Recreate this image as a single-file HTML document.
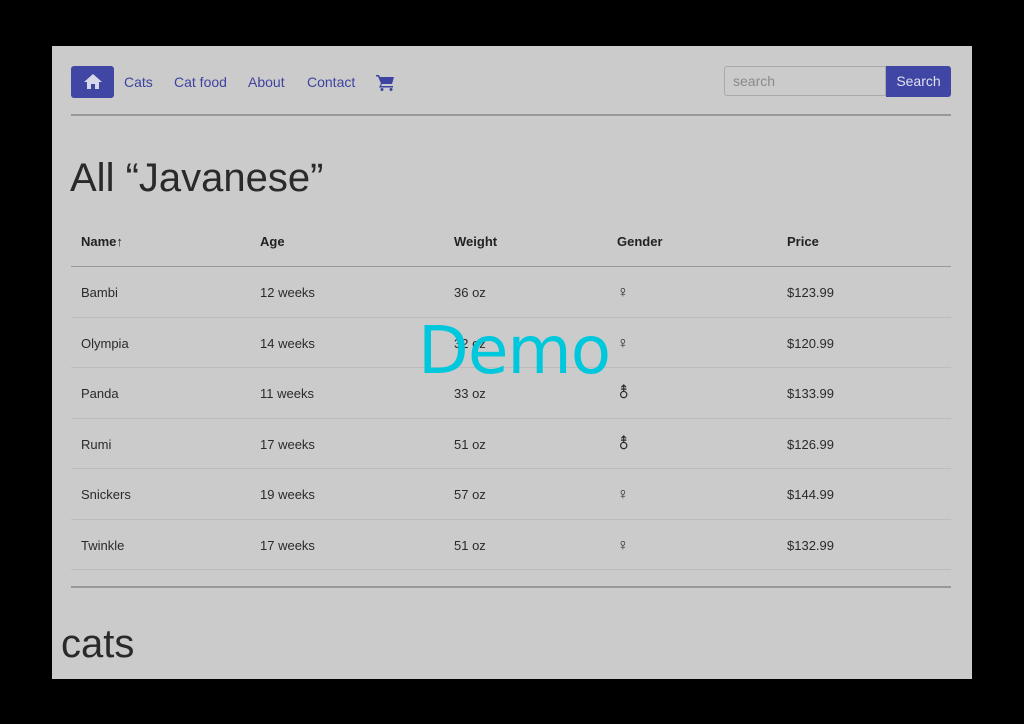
<!DOCTYPE html>
<html><head><style>
body{margin:0;background:#000;width:1024px;height:724px;position:relative;font-family:"Liberation Sans",sans-serif;overflow:hidden}
#p{position:absolute;left:52px;top:46px;width:920px;height:633px;background:#cbcbcb;overflow:hidden}
.a{position:absolute;white-space:nowrap}
.nav{color:#3d43a0;font-size:14px;top:28px}
.th{font-size:13px;font-weight:bold;color:#222;top:188px}
.td{font-size:13px;color:#2a2a2a;top:222px;line-height:50.5px}
.ln{position:absolute;left:19px;width:880px;height:1px;background:#bcbcbc}
</style></head><body><div id="p">
<div class="a" style="left:19px;top:20px;width:43px;height:32px;background:#3f46a4;border-radius:3px"></div>
<svg class="a" style="left:31px;top:27px" width="20" height="17" viewBox="0 0 20 17"><path d="M10 1L1 9h3v7h4v-5h4v5h4V9h3z" fill="#d8d8e8"/></svg>
<div class="a nav" style="left:72px">Cats</div>
<div class="a nav" style="left:122px">Cat food</div>
<div class="a nav" style="left:196px">About</div>
<div class="a nav" style="left:255px">Contact</div>
<svg class="a" style="left:324px;top:28px" width="20" height="17" viewBox="0 0 20 17"><path d="M0 1h3l1 2h14l-2 7H6l-1 2h12v1.5H3l2-4L2 2.5H0z" fill="#3d43a0"/><circle cx="6" cy="15.5" r="1.5" fill="#3d43a0"/><circle cx="15" cy="15.5" r="1.5" fill="#3d43a0"/></svg>
<div class="a" style="left:672px;top:20px;width:162px;height:30px;border:1px solid #aaa;border-radius:3px 0 0 3px;box-sizing:border-box;color:#8a8a8a;font-size:14px;line-height:28px;padding-left:8px">search</div>
<div class="a" style="left:834px;top:20px;width:65px;height:31px;background:#3f46a4;border-radius:0 3px 3px 0;color:#e0e0ee;font-size:14px;line-height:31px;text-align:center">Search</div>
<div class="a" style="left:19px;top:68px;width:880px;height:2px;background:#999"></div>
<div class="a" style="left:18px;top:110px;font-size:40px;color:#2a2a2a">All “Javanese”</div>
<div class="a th" style="left:29px">Name↑</div>
<div class="a th" style="left:208px">Age</div>
<div class="a th" style="left:402px">Weight</div>
<div class="a th" style="left:565px">Gender</div>
<div class="a th" style="left:735px">Price</div>
<div class="ln" style="top:220px;background:#999"></div>
<div class="ln" style="top:271px"></div><div class="ln" style="top:321px"></div><div class="ln" style="top:372px"></div><div class="ln" style="top:422px"></div><div class="ln" style="top:473px"></div><div class="ln" style="top:523px"></div>
<div class="a td" style="left:29px">Bambi<br>Olympia<br>Panda<br>Rumi<br>Snickers<br>Twinkle</div>
<div class="a td" style="left:208px">12 weeks<br>14 weeks<br>11 weeks<br>17 weeks<br>19 weeks<br>17 weeks</div>
<div class="a td" style="left:402px">36 oz<br>32 oz<br>33 oz<br>51 oz<br>57 oz<br>51 oz</div>
<div class="a td" style="left:565px;font-size:16px">♀<br>♀<br>⚨<br>⚨<br>♀<br>♀</div>
<div class="a td" style="left:735px">$123.99<br>$120.99<br>$133.99<br>$126.99<br>$144.99<br>$132.99</div>
<div class="a" style="left:19px;top:540px;width:880px;height:2px;background:#999"></div>
<div class="a" style="left:9px;top:576px;font-size:40px;color:#2a2a2a">cats</div>
<div class="a" style="left:366px;top:266px;font-size:66px;color:#00c8dc;font-family:'DejaVu Sans',sans-serif;letter-spacing:-1px">Demo</div>
</div>
</body></html>
